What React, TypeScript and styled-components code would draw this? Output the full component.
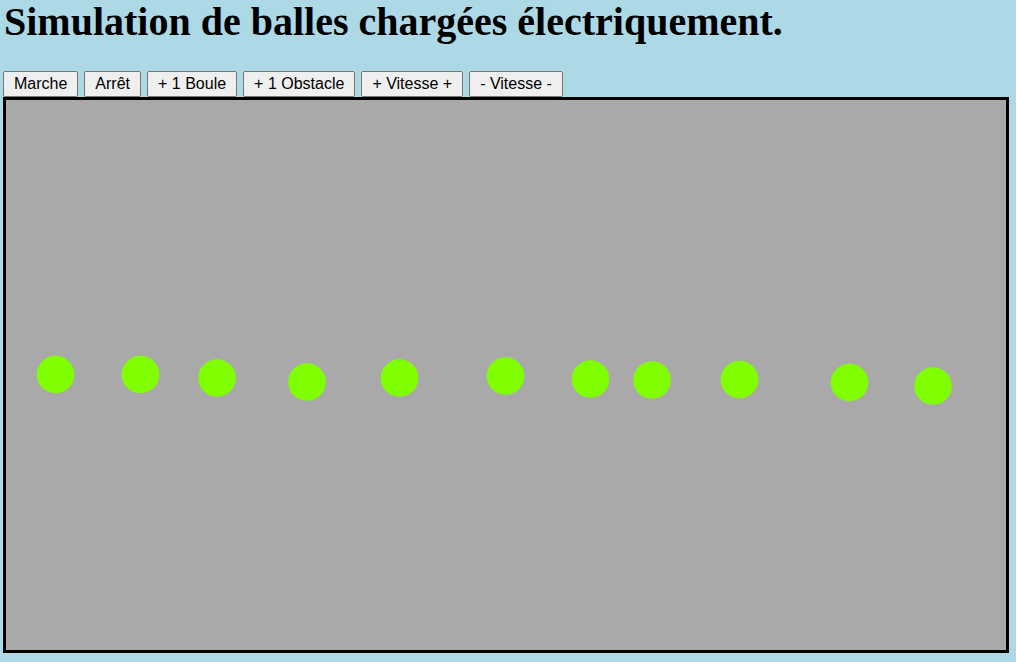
import React from "react";
import styled, { createGlobalStyle } from "styled-components";

const GlobalStyle = createGlobalStyle`
  html, body {
    margin: 0;
    padding: 0;
    background: #add8e6;
  }
  body {
    padding: 0 3px;
    font-family: "Liberation Serif", "Times New Roman", serif;
  }
`;

const Page = styled.main`
  display: flex;
  flex-direction: column;
  align-items: flex-start;
`;

const Title = styled.h1`
  font-family: "Liberation Serif", "Times New Roman", serif;
  font-weight: bold;
  font-size: 40px;
  line-height: normal;
  margin: -2px 0 26px 1px;
  color: #000;
  white-space: nowrap;
`;

const Toolbar = styled.div`
  display: flex;
  gap: 6px;
`;

const Button = styled.button`
  font-family: "Liberation Sans", Arial, sans-serif;
  font-size: 16px;
  height: 26px;
  padding: 0 10px;
  margin: 0;
  color: #000;
  background: #efefef;
  border: 1px solid #767676;
  border-radius: 2px;
  line-height: 18px;
  cursor: pointer;
`;

const Field = styled.svg`
  display: block;
  width: 1000px;
  height: 550px;
  background: #a9a9a9;
  border: 3px solid #000;
  margin-top: 0;
`;

const balls: [number, number][] = [
  [55.5, 374.5],
  [140.5, 374.5],
  [217, 378],
  [307, 382],
  [399.5, 378],
  [505.5, 376],
  [590.5, 379],
  [652, 380],
  [739.5, 379.5],
  [849.5, 382.5],
  [933, 386],
];

const buttons = [
  "Marche",
  "Arrêt",
  "+ 1 Boule",
  "+ 1 Obstacle",
  "+ Vitesse +",
  "- Vitesse -",
];

export default function App() {
  return (
    <>
      <GlobalStyle />
      <Page>
        <Title>Simulation de balles chargées électriquement.</Title>
        <Toolbar>
          {buttons.map((b) => (
            <Button key={b}>{b}</Button>
          ))}
        </Toolbar>
        <Field viewBox="0 0 1000 550">
          {balls.map(([x, y], i) => (
            <circle key={i} cx={x - 6} cy={y - 100} r={18.8} fill="#7fff00" />
          ))}
        </Field>
      </Page>
    </>
  );
}
